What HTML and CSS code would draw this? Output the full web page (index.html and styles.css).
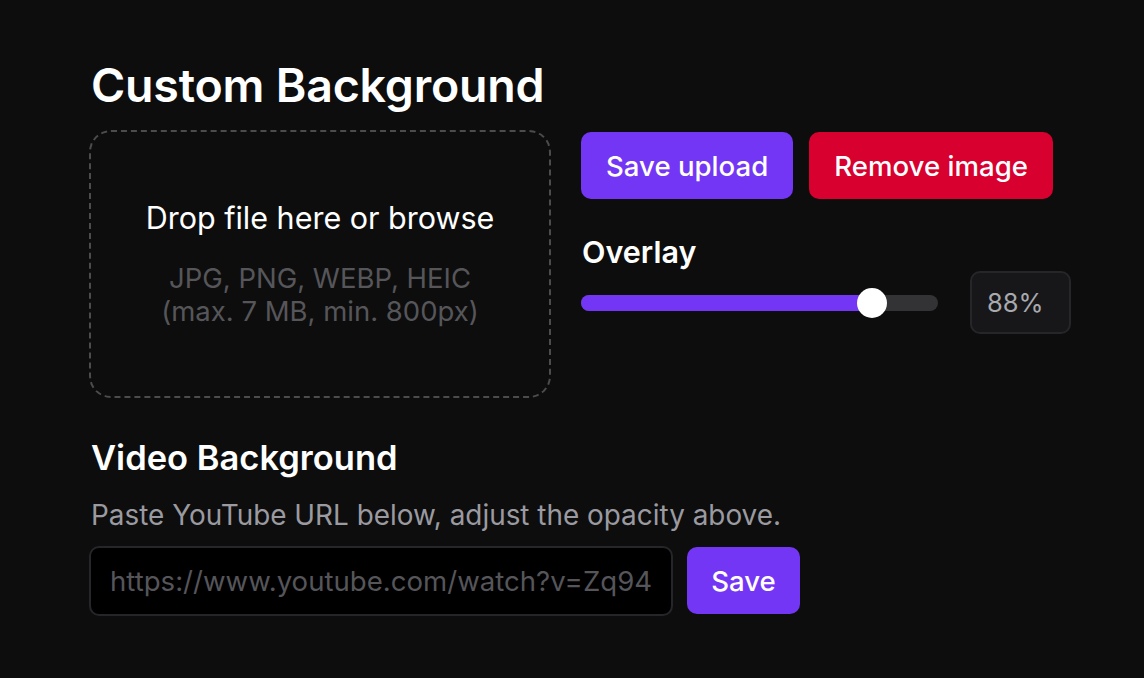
FILE: index.html
```html
<!DOCTYPE html>
<html lang="en">
<head>
<meta charset="utf-8">
<title>Background settings</title>
<link rel="stylesheet" href="styles.css">
</head>
<body>
<main class="settings">
  <h1 class="title">Custom Background</h1>
  <div class="upload-row">
    <label class="dropzone">
      <span class="drop-main">Drop file here or browse</span>
      <span class="drop-hint">JPG, PNG, WEBP, HEIC<br>(max. 7 MB, min. 800px)</span>
    </label>
    <div class="side">
      <div class="actions">
        <button class="btn btn-primary">Save upload</button>
        <button class="btn btn-danger">Remove image</button>
      </div>
      <h2 class="overlay-label">Overlay</h2>
      <div class="slider-row">
        <div class="slider">
          <div class="slider-fill" style="width: 81.5%"></div>
          <div class="slider-thumb" style="left: 81.5%"></div>
        </div>
        <div class="value-box">88%</div>
      </div>
    </div>
  </div>
  <h2 class="subtitle">Video Background</h2>
  <p class="hint">Paste YouTube URL below, adjust the opacity above.</p>
  <div class="url-row">
    <input class="url-input" type="text" placeholder="https://www.youtube.com/watch?v=Zq94">
    <button class="btn btn-primary btn-save">Save</button>
  </div>
</main>
</body>
</html>
```

FILE: styles.css
```css
* { box-sizing: border-box; }

html, body {
  margin: 0;
  height: 100%;
  background: #0d0d0d;
  color: #ffffff;
  font-family: Inter, "Noto Sans", sans-serif;
}

.settings {
  padding: 57px 0 0 89px;
}

.title {
  margin: 0 0 16px 2px;
  font-size: 46.5px;
  font-weight: 600;
  line-height: 57px;
  letter-spacing: -0.2px;
}

.upload-row {
  display: flex;
  gap: 30px;
  align-items: flex-start;
}

.dropzone {
  width: 462px;
  height: 268px;
  border: 2px dashed #4c4c4f;
  border-radius: 22px;
  display: flex;
  flex-direction: column;
  align-items: center;
  justify-content: center;
  text-align: center;
}

.drop-main {
  font-size: 30.5px;
  line-height: 36px;
  color: #ffffff;
  margin-bottom: 26px;
}

.drop-hint {
  font-size: 27.5px;
  line-height: 33px;
  color: #56565a;
}

.side {
  display: flex;
  flex-direction: column;
  padding-top: 2px;
}

.actions {
  display: flex;
  gap: 16px;
}

.btn {
  border: 0;
  height: 67px;
  padding: 0 25px;
  border-radius: 10px;
  font-family: inherit;
  font-size: 27.6px;
  font-weight: 500;
  color: #ffffff;
}

.btn-primary { background: #7436f5; }
.btn-danger { background: #d8002f; }

.overlay-label {
  margin: 33px 0 0 1px;
  font-size: 30.5px;
  font-weight: 600;
  line-height: 40px;
}

.slider-row {
  display: flex;
  align-items: center;
  gap: 32px;
  margin-top: -1px;
}

.slider {
  position: relative;
  width: 357px;
  height: 16px;
  border-radius: 8px;
  background: #333335;
}

.slider-fill {
  height: 100%;
  border-radius: 8px;
  background: #7436f5;
}

.slider-thumb {
  position: absolute;
  top: 50%;
  width: 30px;
  height: 30px;
  margin: -15px 0 0 -15px;
  border-radius: 50%;
  background: #ffffff;
}

.value-box {
  width: 101px;
  height: 63px;
  border: 2px solid #26262a;
  border-radius: 10px;
  background: #17171a;
  color: #a9a9ae;
  font-size: 25.5px;
  display: flex;
  align-items: center;
  padding-left: 15px;
}

.subtitle {
  margin: 38px 0 0 2px;
  font-size: 34.5px;
  font-weight: 600;
  line-height: 44px;
}

.hint {
  margin: 18px 0 0 2px;
  font-size: 27.9px;
  line-height: 34px;
  color: #9a9aa0;
}

.url-row {
  display: flex;
  align-items: flex-start;
  gap: 14px;
  margin-top: 14px;
}

.url-input {
  width: 584px;
  height: 70px;
  border: 2px solid #26262a;
  border-radius: 10px;
  background: #000000;
  padding: 0 10px 0 19px;
  font-family: inherit;
  font-size: 27.6px;
  color: #ffffff;
  outline: none;
}

.url-input::placeholder { color: #55555a; }

.btn-save {
  margin-top: 1px;
  height: 67px;
  width: 113px;
  padding: 0;
}
```
